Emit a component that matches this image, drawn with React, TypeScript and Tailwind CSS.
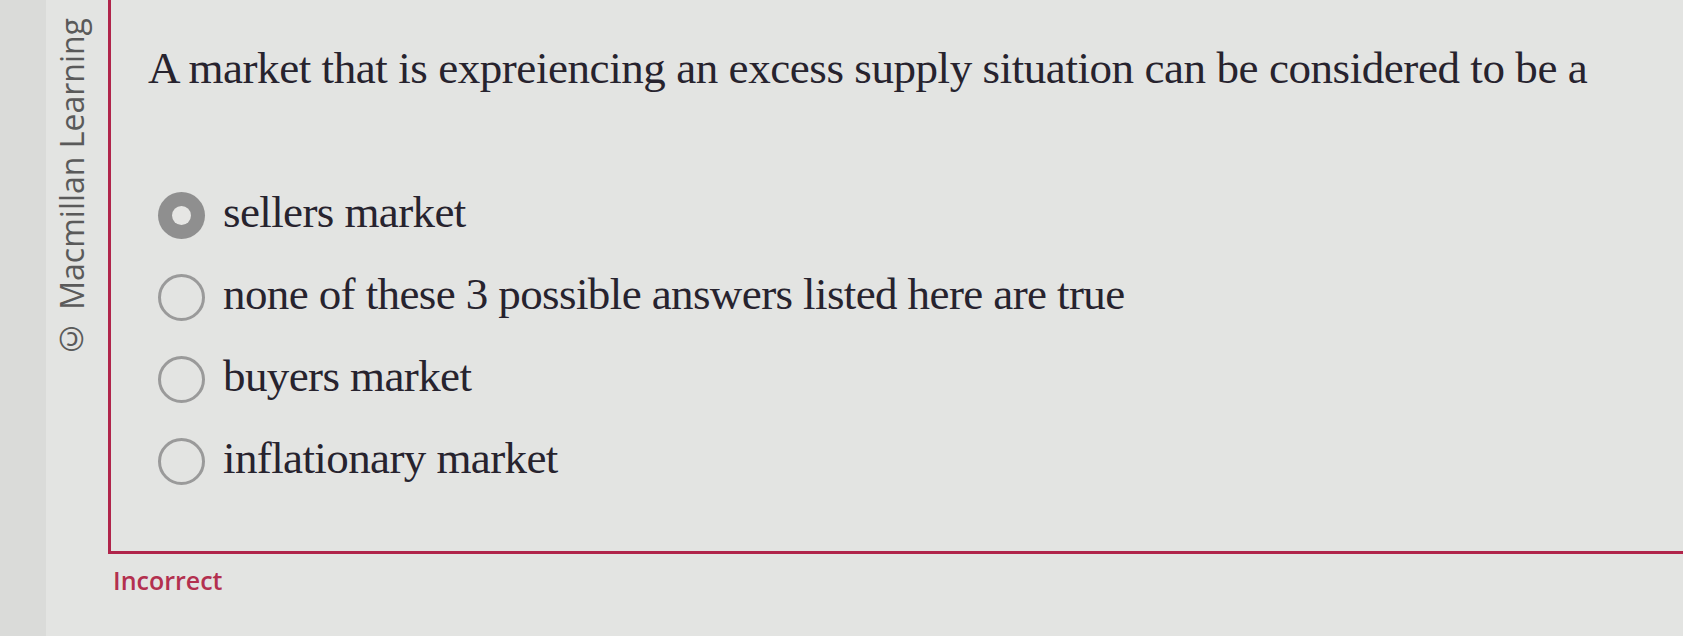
const options = [
  { id: 1, label: "sellers market", selected: true },
  { id: 2, label: "none of these 3 possible answers listed here are true", selected: false },
  { id: 3, label: "buyers market", selected: false },
  { id: 4, label: "inflationary market", selected: false },
]

function Radio({ selected }: { selected: boolean }) {
  if (selected) {
    return (
      <div className="flex h-[47px] w-[47px] shrink-0 items-center justify-center rounded-full bg-[#8f8f8f]">
        <div className="h-[19px] w-[19px] rounded-full bg-[#e6e6e4]" />
      </div>
    )
  }
  return <div className="h-[47px] w-[47px] shrink-0 rounded-full border-[3px] border-[#9a9a9a]" />
}

export default function App() {
  return (
    <div className="flex h-[636px] w-full overflow-hidden bg-[#e3e4e2]">
      {/* left strip */}
      <div className="w-[46px] shrink-0 bg-[#dadbd9]" />

      {/* copyright label */}
      <div className="w-[62px] shrink-0 pl-[10px] pt-[18px]">
        <div className="rotate-180 text-[32px] leading-none text-[#5a5a5a] [font-family:'Open_Sans',sans-serif] [writing-mode:vertical-rl]">
          © Macmillan Learning
        </div>
      </div>

      <div className="flex min-w-0 flex-1 flex-col">
        {/* question box */}
        <div className="h-[554px] border-b-[3px] border-l-[3px] border-[#b0244a] pl-[37px] pt-[46px] text-[#27232e] [font-family:'Liberation_Serif',serif]">
          <p className="whitespace-nowrap text-[45px] leading-none tracking-[-0.43px]">
            A market that is expreiencing an excess supply situation can be considered to be a
          </p>

          <div className="ml-[10px] mt-[101px] flex flex-col gap-[35px]">
            {options.map((o) => (
              <div key={o.id} className="flex h-[47px] items-center gap-[18px]">
                <Radio selected={o.selected} />
                <span className="relative top-[-3px] whitespace-nowrap text-[45px] leading-none tracking-[-0.6px]">
                  {o.label}
                </span>
              </div>
            ))}
          </div>
        </div>

        <div className="mt-[14px] pl-[5px] text-[25px] font-semibold leading-none text-[#b3304f] [font-family:'Open_Sans',sans-serif]">
          Incorrect
        </div>
      </div>
    </div>
  )
}
